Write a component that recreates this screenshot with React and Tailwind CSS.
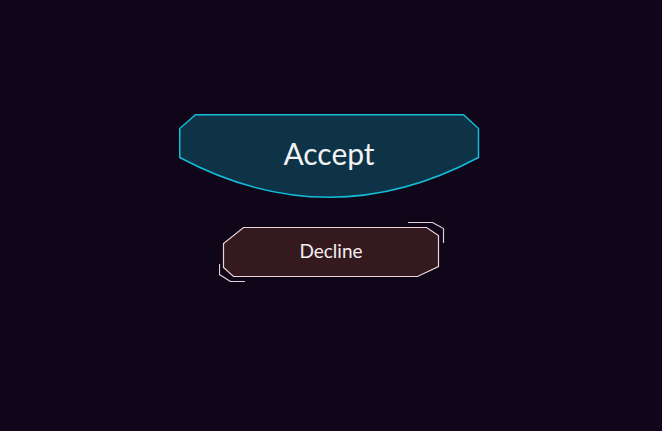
export default function App() {
  return (
    <div className="w-[662px] h-[431px] bg-[#10061a] flex flex-col items-center pt-[114px]" style={{ fontFamily: "Lato, 'Open Sans', sans-serif" }}>
      <button className="relative w-[301px] h-[85px] ml-[-4px] flex justify-center pt-[19px] text-[30px] leading-[40px] text-[#f2f2f4]">
        <svg className="absolute inset-0" width="301" height="85" viewBox="0 0 301 85">
          <path d="M16.5 0.75 L284.5 0.75 L299.5 14.5 L299.5 43.5 Q150 123 0.75 43.5 L0.75 14.5 Z" fill="#0e3246" stroke="#14bcd8" strokeWidth="1.5" />
        </svg>
        <span className="relative">Accept</span>
      </button>
      <div className="relative w-[226px] h-[60px] mt-[23px] ml-[2px]">
        <svg className="absolute inset-0" width="226" height="60" viewBox="0 0 226 60">
          <path d="M24.5 5.5 L207.5 5.5 L219.5 13.5 L219.5 44.5 L198.5 54.5 L14.5 54.5 L4.5 45.5 L4.5 21.5 Z" fill="#341a1f" stroke="#ead4d9" strokeWidth="1.2" />
          <path d="M189 0.5 L213.5 0.5 L224.5 6.5 L224.5 21" fill="none" stroke="#d9cfd6" strokeWidth="1.2" />
          <path d="M0.5 42 L0.5 52.5 L11.5 59.5 L26 59.5" fill="none" stroke="#d9cfd6" strokeWidth="1.2" />
        </svg>
        <span className="absolute left-[4px] w-[216px] top-[17px] text-center text-[19px] leading-[24px] text-[#f4eef0]">Decline</span>
      </div>
    </div>
  );
}
